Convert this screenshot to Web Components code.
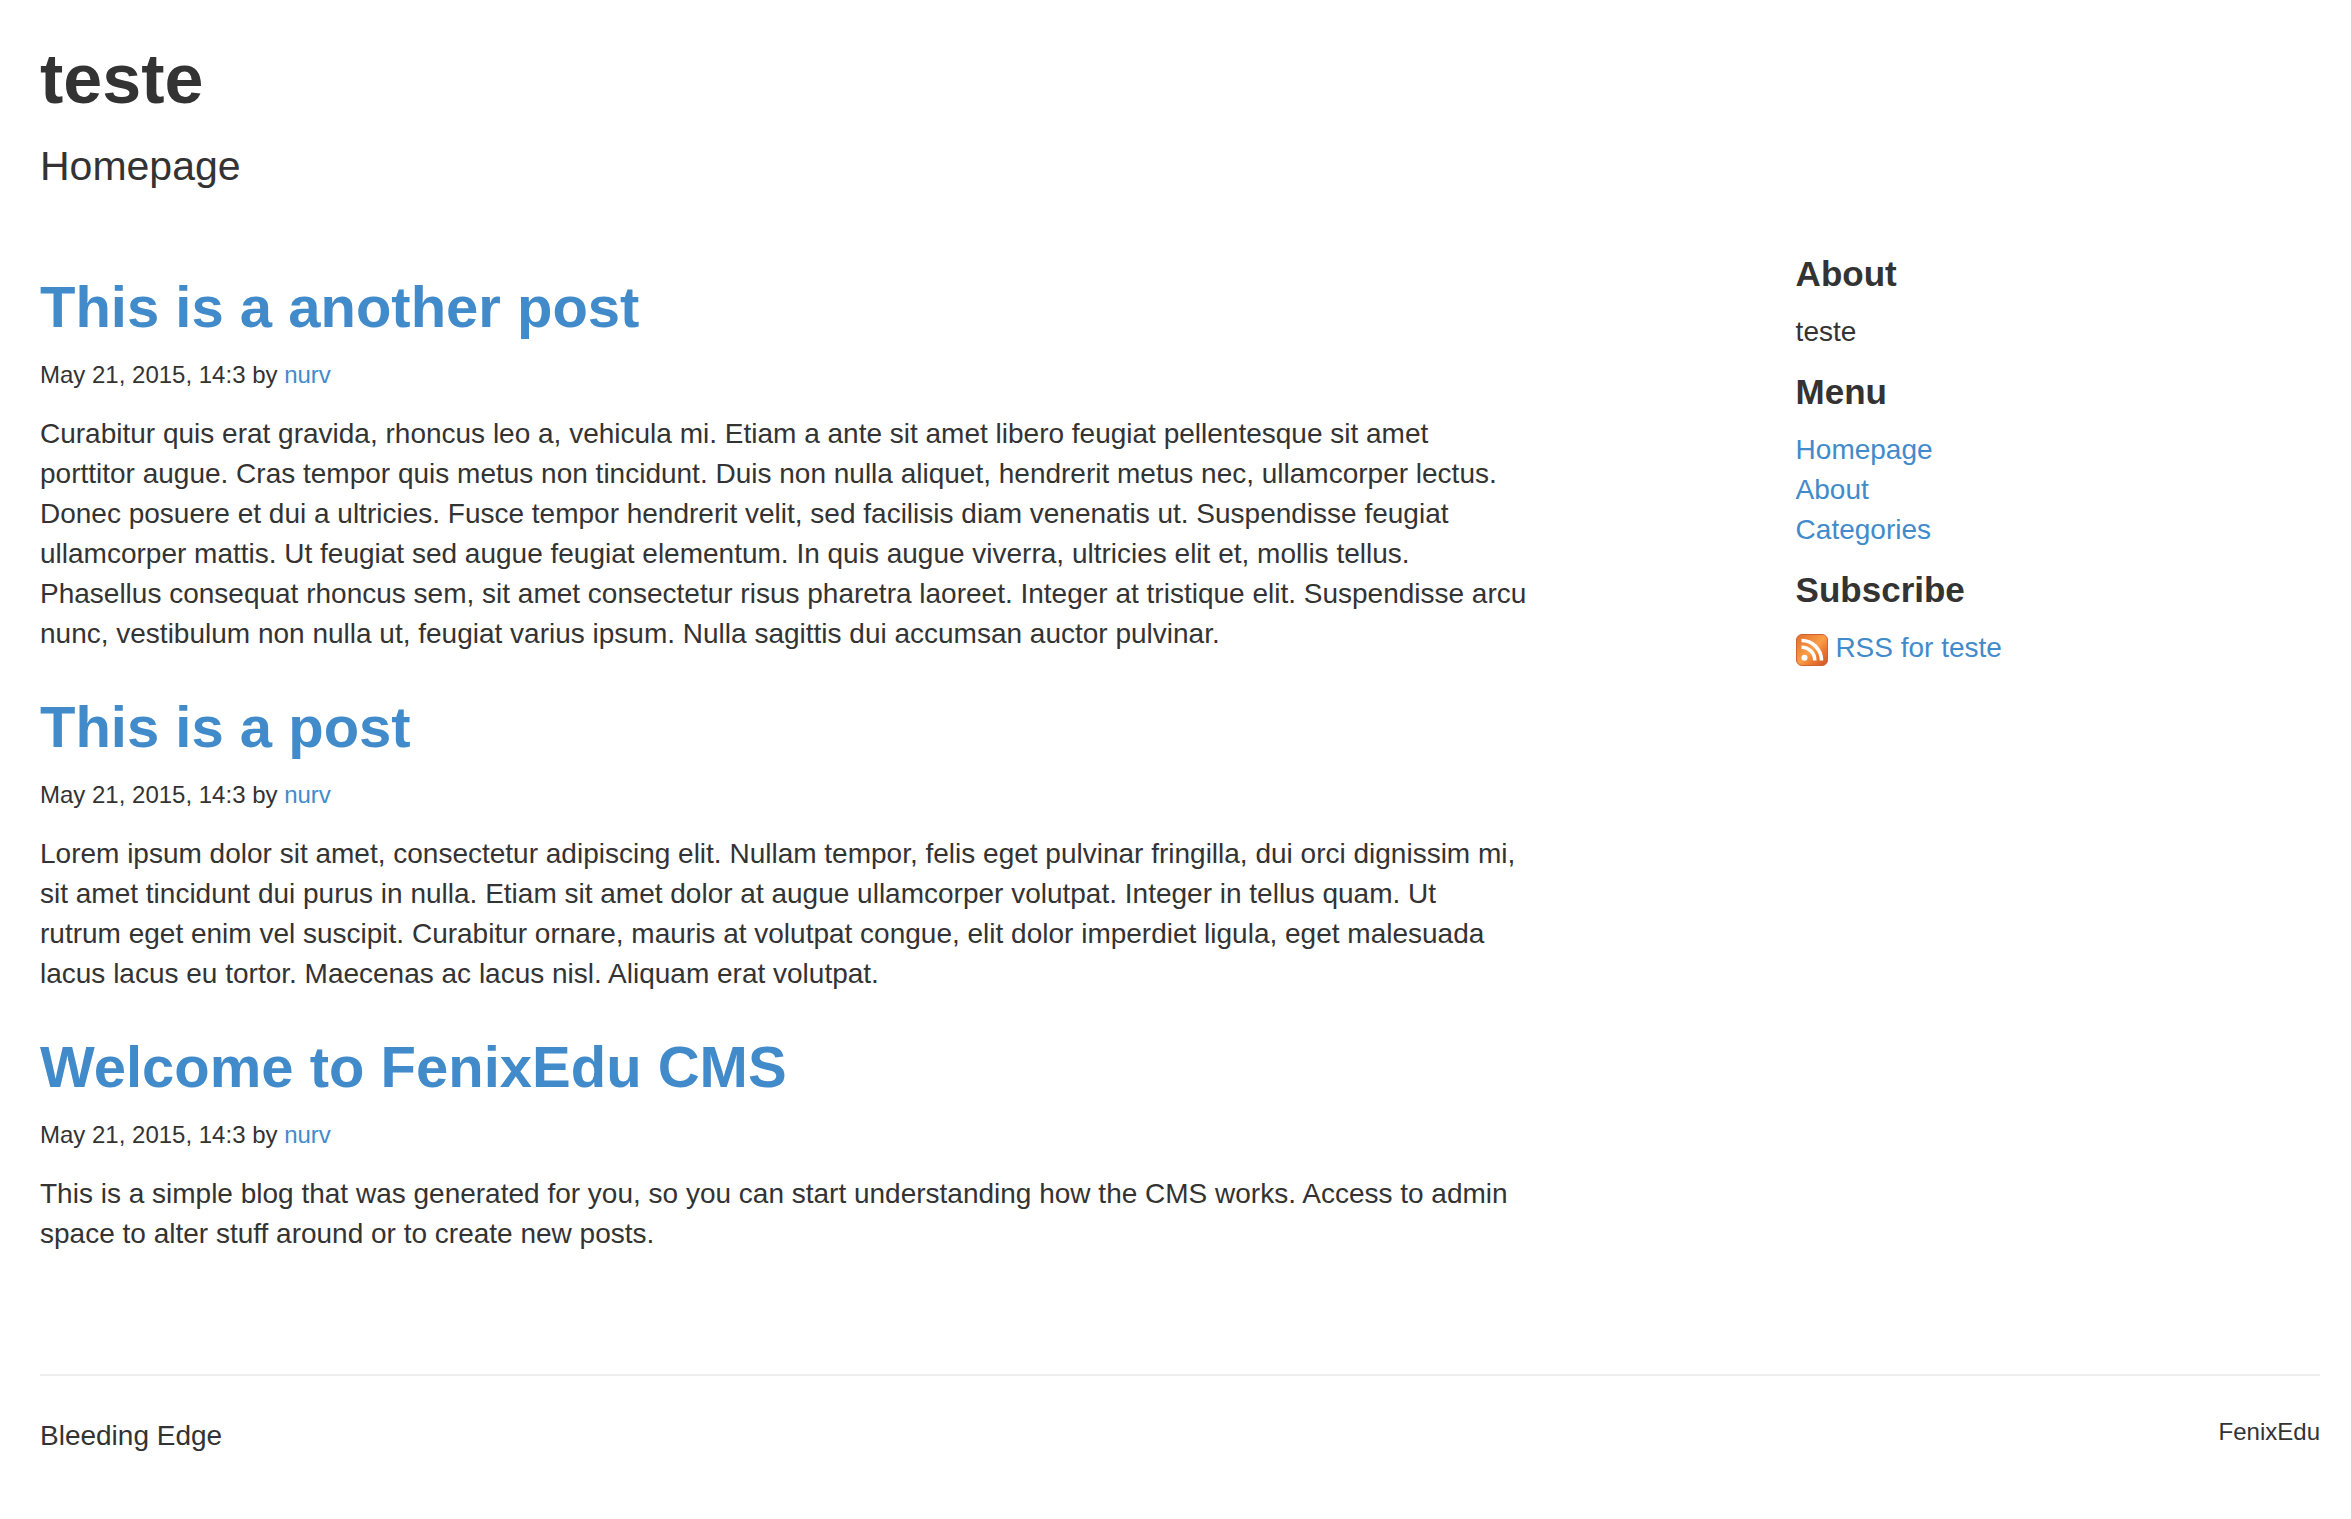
<!DOCTYPE html>
<html lang="en">
<head>
<meta charset="utf-8">
<title>teste</title>
<style>
  body {
    margin: 0;
    background: #fff;
    color: #333;
    font: 28px/40px "Liberation Sans", Arial, sans-serif;
    --link: #428bca;
    --rule: #eee;
  }
</style>
</head>
<body>
<blog-page>
  <blog-header slot="header" name="teste" tagline="Homepage"></blog-header>
  <blog-post heading="This is a another post" date="May 21, 2015, 14:3" author="nurv">Curabitur quis erat gravida, rhoncus leo a, vehicula mi. Etiam a ante sit amet libero feugiat pellentesque sit amet<br>porttitor augue. Cras tempor quis metus non tincidunt. Duis non nulla aliquet, hendrerit metus nec, ullamcorper lectus.<br>Donec posuere et dui a ultricies. Fusce tempor hendrerit velit, sed facilisis diam venenatis ut. Suspendisse feugiat<br>ullamcorper mattis. Ut feugiat sed augue feugiat elementum. In quis augue viverra, ultricies elit et, mollis tellus.<br>Phasellus consequat rhoncus sem, sit amet consectetur risus pharetra laoreet. Integer at tristique elit. Suspendisse arcu<br>nunc, vestibulum non nulla ut, feugiat varius ipsum. Nulla sagittis dui accumsan auctor pulvinar.</blog-post>
  <blog-post heading="This is a post" date="May 21, 2015, 14:3" author="nurv">Lorem ipsum dolor sit amet, consectetur adipiscing elit. Nullam tempor, felis eget pulvinar fringilla, dui orci dignissim mi,<br>sit amet tincidunt dui purus in nulla. Etiam sit amet dolor at augue ullamcorper volutpat. Integer in tellus quam. Ut<br>rutrum eget enim vel suscipit. Curabitur ornare, mauris at volutpat congue, elit dolor imperdiet ligula, eget malesuada<br>lacus lacus eu tortor. Maecenas ac lacus nisl. Aliquam erat volutpat.</blog-post>
  <blog-post heading="Welcome to FenixEdu CMS" date="May 21, 2015, 14:3" author="nurv">This is a simple blog that was generated for you, so you can start understanding how the CMS works. Access to admin<br>space to alter stuff around or to create new posts.</blog-post>
  <side-widget slot="sidebar" heading="About">teste</side-widget>
  <side-widget slot="sidebar" heading="Menu">
    <menu-link>Homepage</menu-link>
    <menu-link>About</menu-link>
    <menu-link>Categories</menu-link>
  </side-widget>
  <side-widget slot="sidebar" heading="Subscribe">
    <menu-link><rss-icon></rss-icon> RSS for teste</menu-link>
  </side-widget>
  <blog-footer slot="footer"><span>Bleeding Edge</span><span slot="end">FenixEdu</span></blog-footer>
</blog-page>
<script>
  const define = (name, render) => customElements.define(name, class extends HTMLElement {
    constructor() {
      super();
      this.attachShadow({ mode: 'open' }).innerHTML = render(this);
    }
  });

  define('blog-page', () => `
    <style>
      :host { display: block; padding: 40px 31px 40px 40px; }
      .columns { display: flex; justify-content: space-between; margin-top: 59px; }
      main { flex: 0 0 66%; display: flex; flex-direction: column; gap: 40px; padding-top: 20px; }
      aside { flex: 0 0 23%; display: flex; flex-direction: column; gap: 20px; }
    </style>
    <slot name="header"></slot>
    <div class="columns">
      <main><slot></slot></main>
      <aside><slot name="sidebar"></slot></aside>
    </div>
    <slot name="footer"></slot>`);

  define('blog-header', el => `
    <style>
      :host { display: block; }
      h1 { margin: 0 0 18px; font-size: 70px; line-height: 79px; }
      p { margin: 0; font-size: 41px; line-height: 58px; font-weight: 300; }
    </style>
    <header>
      <h1>${el.getAttribute('name')}</h1>
      <p>${el.getAttribute('tagline')}</p>
    </header>`);

  define('blog-post', el => `
    <style>
      :host { display: block; }
      h2 { margin: 0 0 14px; font-size: 58px; line-height: 66px; }
      a { color: var(--link); text-decoration: none; }
      p { margin: 0; }
      .meta { margin-bottom: 20px; }
      small { font-size: 24px; line-height: 1; }
    </style>
    <article>
      <h2><a href="#">${el.getAttribute('heading')}</a></h2>
      <p class="meta"><small>${el.getAttribute('date')} by <a href="#">${el.getAttribute('author')}</a></small></p>
      <p><slot></slot></p>
    </article>`);

  define('side-widget', el => `
    <style>
      :host { display: block; }
      h4 { margin: 0 0 18px; font-size: 35px; line-height: 40px; }
    </style>
    <section>
      <h4>${el.getAttribute('heading')}</h4>
      <slot></slot>
    </section>`);

  define('menu-link', () => `
    <style>
      :host { display: block; }
      a { color: var(--link); text-decoration: none; }
    </style>
    <a href="#"><slot></slot></a>`);

  define('rss-icon', () => `
    <style>
      :host { display: inline-block; width: 32px; height: 32px; vertical-align: middle; line-height: 0; }
      svg { display: block; }
    </style>
    <svg width="32" height="32" viewBox="0 0 32 32" aria-hidden="true">
      <defs>
        <linearGradient id="g" x1="0" y1="0" x2="1" y2="1">
          <stop offset="0" stop-color="#e0702f"/>
          <stop offset=".3" stop-color="#f08a3c"/>
          <stop offset=".5" stop-color="#fb9e47"/>
          <stop offset=".72" stop-color="#e9762f"/>
          <stop offset="1" stop-color="#cf5228"/>
        </linearGradient>
      </defs>
      <rect x=".5" y=".5" width="31" height="31" rx="5.5" fill="url(#g)" stroke="#d0632f"/>
      <circle cx="8.5" cy="23.8" r="3" fill="#fff"/>
      <path d="M5.5 13.2A13.3 13.3 0 0 1 18.8 26.5M5.5 6.5A20 20 0 0 1 25.5 26.5" fill="none" stroke="#fff" stroke-width="3.6"/>
    </svg>`);

  define('blog-footer', () => `
    <style>
      :host { display: block; margin-top: 120px; }
      footer { display: flex; justify-content: space-between; align-items: flex-start; border-top: 2px solid var(--rule); padding-top: 40px; }
      .end { font-size: 24px; line-height: 32px; }
    </style>
    <footer><slot></slot><div class="end"><slot name="end"></slot></div></footer>`);
</script>
</body>
</html>
